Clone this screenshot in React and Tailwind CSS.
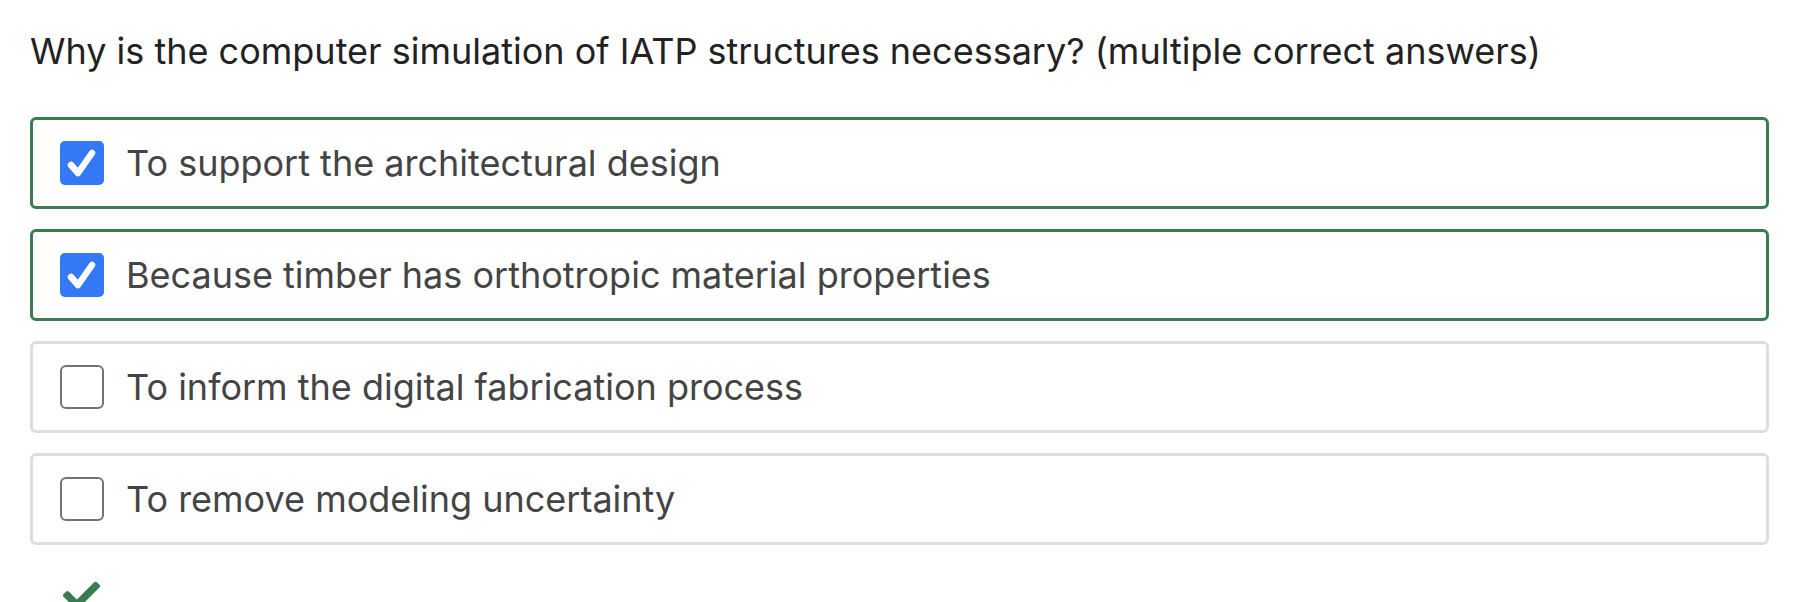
import React, { useState } from "react";
import { FaCheck } from "react-icons/fa";

const options = [
  { label: "To support the architectural design", checked: true },
  { label: "Because timber has orthotropic material properties", checked: true },
  { label: "To inform the digital fabrication process", checked: false },
  { label: "To remove modeling uncertainty", checked: false },
];

function Checkbox({ checked }) {
  if (checked) {
    return (
      <span className="flex h-[44px] w-[44px] shrink-0 items-center justify-center rounded-[5px] bg-[#3478f6]">
        <svg viewBox="0 0 44 44" className="h-[44px] w-[44px]">
          <polyline
            points="11,24 18,32 32,12"
            fill="none"
            stroke="white"
            strokeWidth="6.5"
            strokeLinecap="round"
            strokeLinejoin="round"
          />
        </svg>
      </span>
    );
  }
  return (
    <span className="block h-[44px] w-[44px] shrink-0 rounded-[6px] border-2 border-[#737373] bg-white" />
  );
}

export default function App() {
  const [answers, setAnswers] = useState(options);

  const toggle = (i) =>
    setAnswers(answers.map((a, j) => (j === i ? { ...a, checked: !a.checked } : a)));

  return (
    <div className="h-[602px] overflow-hidden bg-white pl-[30px] pt-[29px] font-['Inter','Liberation_Sans',sans-serif]">
      <h2 className="text-[36px] leading-[44px] font-normal text-[#222]">
        Why is the computer simulation of IATP structures necessary? (multiple correct answers)
      </h2>
      <div className="mt-[44px] flex w-[1739px] flex-col gap-[20px]">
        {answers.map((a, i) => (
          <label
            key={a.label}
            onClick={() => toggle(i)}
            className={`flex h-[92px] cursor-pointer items-center gap-[22px] rounded-[6px] border-[3px] pl-[27px] ${
              a.checked ? "border-[#3a7b51]" : "border-[#dedede]"
            }`}
          >
            <Checkbox checked={a.checked} />
            <span className="text-[36px] leading-[44px] text-[#444]">{a.label}</span>
          </label>
        ))}
      </div>
      <div className="mt-[32px] pl-[33px] text-[#3a7b51]">
        <FaCheck size={37} />
      </div>
    </div>
  );
}
